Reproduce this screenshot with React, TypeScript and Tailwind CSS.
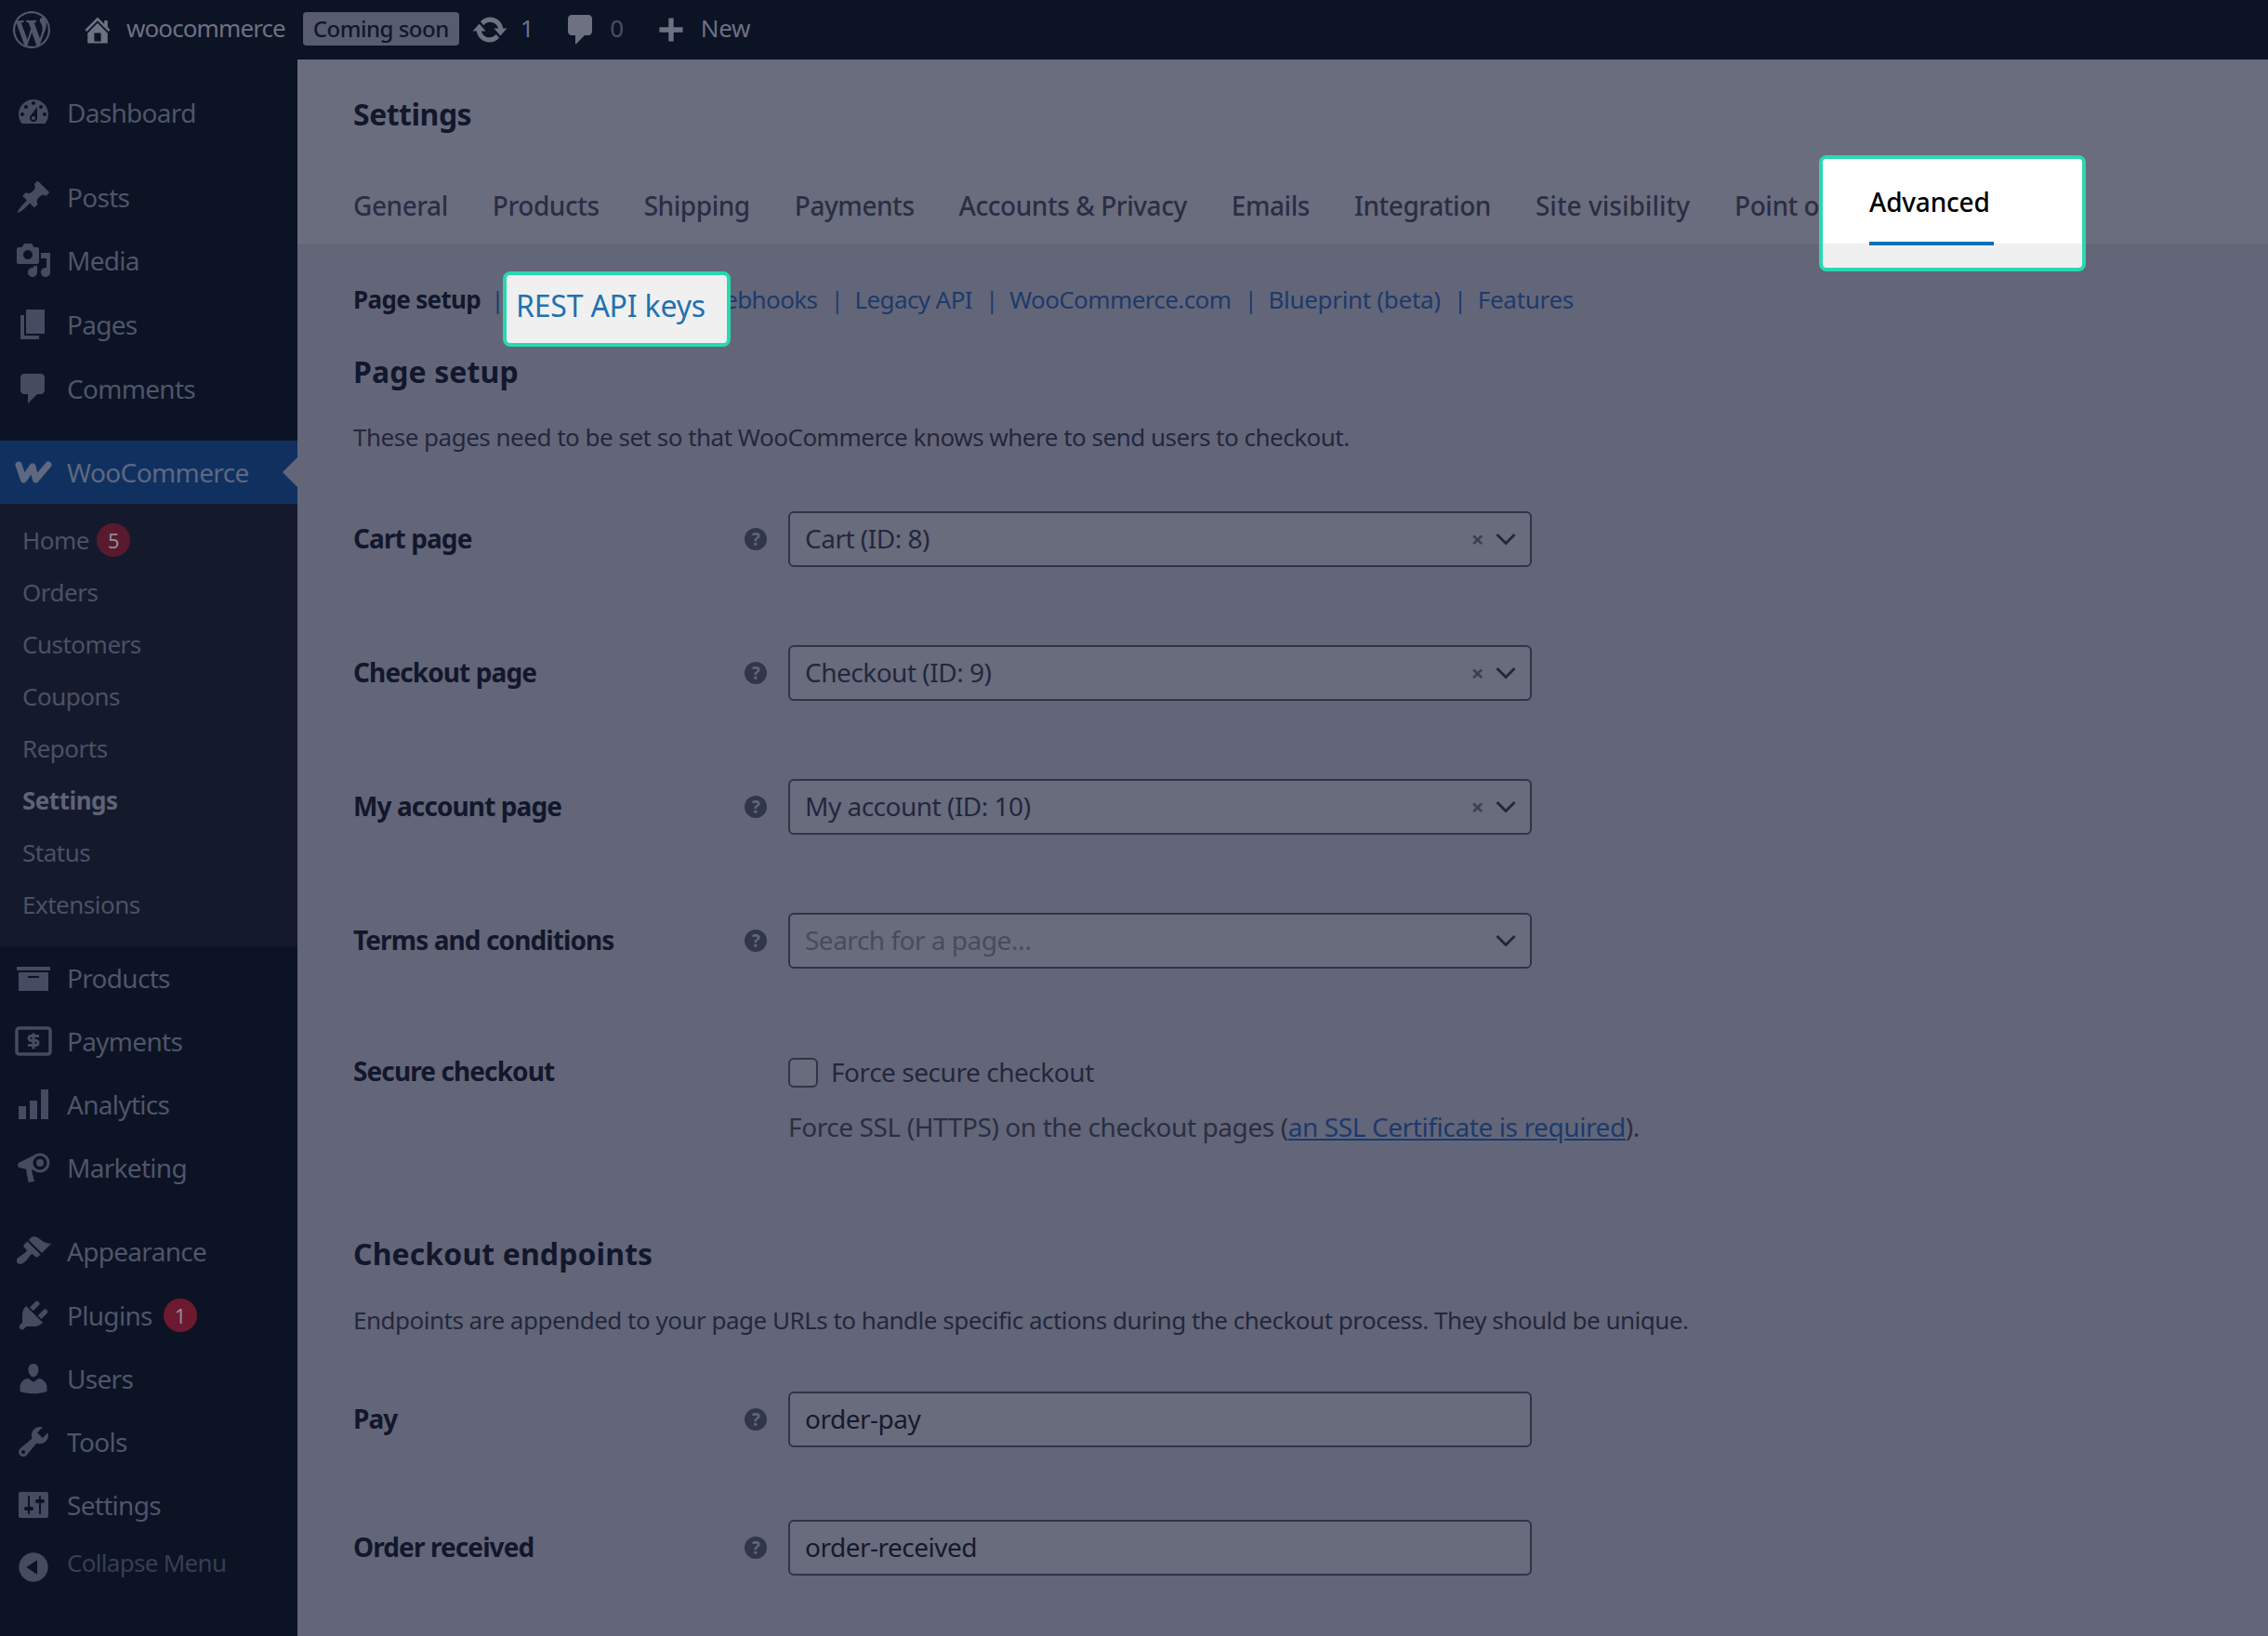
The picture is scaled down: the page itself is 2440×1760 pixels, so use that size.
import React from "react";

const P: Record<string, string> = {
  dashboard: "M3.76 16h12.48c1.1-1.37 1.76-3.11 1.76-5 0-4.42-3.58-8-8-8s-8 3.58-8 8c0 1.89.66 3.63 1.76 5zM10 4c.55 0 1 .45 1 1s-.45 1-1 1-1-.45-1-1 .45-1 1-1zM6 6c.55 0 1 .45 1 1s-.45 1-1 1-1-.45-1-1 .45-1 1-1zm8 0c.55 0 1 .45 1 1s-.45 1-1 1-1-.45-1-1 .45-1 1-1zm-5.37 5.55L12 7v6c0 1.1-.9 2-2 2s-2-.9-2-2c0-.57.24-1.08.63-1.45zM4 10c.55 0 1 .45 1 1s-.45 1-1 1-1-.45-1-1 .45-1 1-1zm12 0c.55 0 1 .45 1 1s-.45 1-1 1-1-.45-1-1 .45-1 1-1zm-5 3c0-.55-.45-1-1-1s-1 .45-1 1 .45 1 1 1 1-.45 1-1z",
  post: "M10.44 3.02l1.82-1.82 6.36 6.35-1.83 1.82c-1.05-.68-2.48-.57-3.41.36l-.75.75c-.92.93-1.04 2.35-.35 3.41l-1.83 1.82-2.41-2.41-2.8 2.79c-.42.42-3.38 2.71-3.8 2.29s1.86-3.39 2.28-3.81l2.79-2.79L4.1 9.36l1.83-1.82c1.05.69 2.48.57 3.4-.36l.75-.75c.93-.92 1.05-2.35.36-3.41z",
  media: "M13 11V4c0-.55-.45-1-1-1h-1.67L9 1H5L3.67 3H2c-.55 0-1 .45-1 1v7c0 .55.45 1 1 1h10c.55 0 1-.45 1-1zM7 4.5c1.38 0 2.5 1.12 2.5 2.5S8.38 9.5 7 9.5 4.5 8.38 4.5 7 5.62 4.5 7 4.5zM14 6h5v10.5c0 1.38-1.12 2.5-2.5 2.5S14 17.88 14 16.5s1.12-2.5 2.5-2.5c.17 0 .34.02.5.05V9h-3V6zm-4 8.05V13h2v3.5c0 1.38-1.12 2.5-2.5 2.5S7 17.88 7 16.5 8.12 14 9.5 14c.17 0 .34.02.5.05z",
  page: "M6 15V2h10v13H6zm-1 1h8v2H3V5h2v11z",
  comment: "M5 2h9c1.1 0 2 .9 2 2v7c0 1.1-.9 2-2 2h-2l-5 5v-5H5c-1.1 0-2-.9-2-2V4c0-1.1.9-2 2-2z",
  archive: "M19 4v2H1V4h18zM2 7h16v10H2V7zm11 3V9H7v1h6z",
  bars: "M2 11h4v7H2zM8 8h4v10H8zM14 2h4v16h-4z",
  appearance: "M14.48 11.06L7.41 3.99l1.5-1.5c.5-.56 2.3-.47 3.51.32 1.21.8 1.43 1.28 2.91 2.1 1.18.64 2.45 1.26 4.45.85zm-.71.71L6.7 4.7 4.93 6.47c-.39.39-.39 1.02 0 1.41l1.06 1.06c.39.39.39 1.03 0 1.42-.6.6-1.43 1.11-2.21 1.69-.35.26-.7.53-1.01.84C1.43 13.23.4 14.67 1.4 16.54c1.87 1 3.31-.03 4.65-1.37.31-.31.58-.66.84-1.01.58-.78 1.09-1.61 1.69-2.21.39-.39 1.02-.39 1.41 0l1.06 1.06c.39.39 1.02.39 1.41 0z",
  plugin: "M13.11 4.36L9.87 7.6 8 5.73l3.24-3.24c.35-.34 1.05-.2 1.56.32.52.51.66 1.21.31 1.55zm-8 1.77l.91-1.12 9.01 9.01-1.19.84c-.71.71-2.63 1.16-3.82 1.16H6.14L4.9 17.26c-.59.59-1.54.59-2.12 0-.59-.58-.59-1.53 0-2.12l1.24-1.24v-3.88c0-1.13.4-3.19 1.09-3.89zm7.26 3.97l3.24-3.24c.34-.35 1.04-.21 1.55.31.52.51.66 1.21.31 1.55l-3.24 3.25z",
  users: "M10 9.25c-2.27 0-2.73-3.44-2.73-3.44C7 4.02 7.82 2 9.97 2c2.16 0 2.98 2.02 2.71 3.81 0 0-.41 3.44-2.68 3.44zm0 2.57L12.72 10c2.39 0 4.52 2.33 4.52 4.53v2.49s-3.65 1.13-7.24 1.13c-3.65 0-7.24-1.13-7.24-1.13v-2.49c0-2.25 1.94-4.48 4.47-4.48z",
  tools: "M16.68 9.77c-1.34 1.34-3.3 1.67-4.95.99l-5.41 6.52c-.99.99-2.59.99-3.58 0s-.99-2.59 0-3.57l6.52-5.42c-.68-1.65-.35-3.61.99-4.95 1.28-1.28 3.12-1.62 4.72-1.06l-2.89 2.89 2.82 2.82 2.86-2.87c.53 1.58.18 3.39-1.08 4.65zM3.81 16.21c.4.39 1.04.39 1.43 0 .4-.4.4-1.04 0-1.43-.39-.4-1.03-.4-1.43 0-.39.39-.39 1.03 0 1.43z",
  settings: "M18 16V4c0-.55-.45-1-1-1H3c-.55 0-1 .45-1 1v12c0 .55.45 1 1 1h14c.55 0 1-.45 1-1zM8 11h1c.55 0 1 .45 1 1s-.45 1-1 1H8v1.5c0 .28-.22.5-.5.5s-.5-.22-.5-.5V13H6c-.55 0-1-.45-1-1s.45-1 1-1h1V5.5c0-.28.22-.5.5-.5s.5.22.5.5V11zm5-2h-1c-.55 0-1-.45-1-1s.45-1 1-1h1V5.5c0-.28.22-.5.5-.5s.5.22.5.5V7h1c.55 0 1 .45 1 1s-.45 1-1 1h-1v5.5c0 .28-.22.5-.5.5s-.5-.22-.5-.5V9z",
  collapse: "M10 2.16c4.33 0 7.84 3.51 7.84 7.84s-3.51 7.84-7.84 7.84S2.16 14.33 2.16 10 5.71 2.16 10 2.16zm2 11.72V6.12L6.18 9.97z",
  home: "M16 8.5l1.53 1.53-1.06 1.06L10 4.62l-6.47 6.47-1.06-1.06L10 2.5l4 4v-2h2v4zm-6-2.46l6 5.99V18H4v-5.97zM12 17v-5H8v5h4z",
  update: "M10.2 3.28c3.53 0 6.43 2.61 6.92 6h2.08l-3.5 4-3.5-4h2.32c-.45-1.97-2.21-3.45-4.32-3.45-1.45 0-2.73.71-3.54 1.78L4.95 5.66C6.23 4.2 8.11 3.28 10.2 3.28zm-.4 13.44c-3.52 0-6.43-2.61-6.92-6H.8l3.5-4c1.17 1.33 2.33 2.67 3.5 4H5.48c.45 1.97 2.21 3.45 4.32 3.45 1.45 0 2.73-.71 3.54-1.78l1.71 1.95c-1.28 1.46-3.15 2.38-5.25 2.38z",
  plus: "M8.5 3h3v5.5H17v3h-5.5V17h-3v-5.5H3v-3h5.5z",
  wp: "M20 10c0-5.51-4.49-10-10-10C4.48 0 0 4.49 0 10c0 5.52 4.48 10 10 10 5.51 0 10-4.48 10-10zM7.78 15.37L4.37 6.22c.55-.02 1.17-.08 1.17-.08.5-.06.44-1.13-.06-1.11 0 0-1.45.11-2.37.11-.18 0-.37 0-.58-.01C4.12 2.69 6.87 1.11 10 1.11c2.33 0 4.45.87 6.05 2.34-.68-.11-1.65.39-1.65 1.58 0 .74.45 1.36.9 2.1.35.61.55 1.36.55 2.46 0 1.49-1.4 5-1.4 5l-3.03-8.37c.54-.02.82-.17.82-.17.5-.05.44-1.25-.06-1.22 0 0-1.44.12-2.38.12-.87 0-2.33-.12-2.33-.12-.5-.03-.56 1.2-.06 1.22l.92.08 1.26 3.41zM17.41 10c.24-.64.74-1.87.43-4.25.7 1.29 1.05 2.71 1.05 4.25 0 3.29-1.73 6.24-4.4 7.78.97-2.59 1.94-5.2 2.92-7.78zM6.1 18.09C3.12 16.65 1.11 13.53 1.11 10c0-1.3.23-2.48.72-3.59C3.25 10.3 4.67 14.2 6.1 18.09zm4.03-6.63l2.58 6.98c-.86.29-1.76.45-2.71.45-.79 0-1.57-.11-2.29-.33.81-2.38 1.62-4.74 2.42-7.1z",
};

function Icon({ d, className }: { d: string; className: string }) {
  return (
    <svg viewBox="0 0 20 20" className={className} fill="currentColor" aria-hidden="true">
      <path d={P[d]} />
    </svg>
  );
}

function PayIcon() {
  return (
    <svg viewBox="0 0 40 32" className="w-10 h-8" aria-hidden="true">
      <rect x="2" y="2" width="36" height="28" rx="2.5" fill="none" stroke="currentColor" strokeWidth="3.5" />
      <path d="M26 10.5h-8.500a1.500 1.500 0 0 0 0 5h5a1.500 1.500 0 0 1 0 5H14M20 7.500v17" fill="none" stroke="currentColor" strokeWidth="3" />
    </svg>
  );
}

function MegaIcon() {
  return (
    <svg viewBox="0 0 36 36" className="w-9 h-9" fill="currentColor" aria-hidden="true">
      <path d="M19 4.500 3 12.500c-2.500 1.300-2.500 5 0 5.800l7 1.500 2.500 14.200 6.500-1-3-12.400 7 .9C16 18 15 10 19 4.500z" />
      <path fillRule="evenodd" d="M25 2.500a10.500 10.500 0 1 1 0 21 10.500 10.500 0 0 1 0-21zm0 3a7.500 7.500 0 1 0 0 15 7.500 7.500 0 0 0 0-15zm0 3.500a4 4 0 1 1 0 8 4 4 0 0 1 0-8z" />
    </svg>
  );
}

function WooIcon() {
  return (
    <svg viewBox="0 0 40 26" className="w-10 h-[26px]" fill="none" stroke="currentColor" strokeWidth="7" strokeLinejoin="round" strokeLinecap="round" aria-hidden="true">
      <path d="M4 5 9.500 21 19 7l3.500 14L36 5" />
    </svg>
  );
}

function Item({ icon, label, badge, faded, h = "h-[68px]" }: { icon: string; label: string; badge?: string; faded?: boolean; h?: string }) {
  return (
    <div className={h + " flex items-center text-[#4f556a] tracking-[-0.7px]"}>
      <div className="w-[72px] flex justify-center text-[#454b60]">
        {icon === "pay" ? <PayIcon /> : icon === "mega" ? <MegaIcon /> : <Icon d={icon} className="w-10 h-10" />}
      </div>
      <span className={faded ? "text-[#383e53] text-[26px] mb-[10px]" : ""}>{label}</span>
      {badge ? (
        <span className="ml-3 w-9 h-[36px] rounded-full bg-[#6d1a30] text-[#8c8d9b] text-[22px] flex items-center justify-center">{badge}</span>
      ) : null}
    </div>
  );
}

function Sub({ label, bold, badge }: { label: string; bold?: boolean; badge?: string }) {
  return (
    <div className={"h-[56px] pl-6 flex items-center text-[26px] tracking-[-0.5px] " + (bold ? "font-bold text-[#5f6378]" : "text-[#4b5166]")}>
      <span>{label}</span>
      {badge ? (
        <span className="ml-2 w-9 h-9 rounded-full bg-[#5a1a2e] text-[#8c8d9b] text-[22px] flex items-center justify-center">{badge}</span>
      ) : null}
    </div>
  );
}

function Help() {
  return (
    <span className="w-6 h-6 rounded-full bg-[#31364b] text-[#636678] text-[19px] font-bold leading-none flex items-center justify-center">?</span>
  );
}

function Row({ label, help, children, mb }: { label: string; help?: boolean; children: React.ReactNode; mb: string }) {
  return (
    <div className={"flex items-center " + mb}>
      <div className="w-[421px] mb-[3px] font-bold text-[28px] text-[#12172c] tracking-[-0.9px]">{label}</div>
      <div className="w-[47px] flex">{help ? <Help /> : null}</div>
      {children}
    </div>
  );
}

function Select({ value, placeholder }: { value: string; placeholder?: boolean }) {
  return (
    <div className="w-[800px] h-[60px] rounded-[6px] border-2 border-[#30344a] bg-[#696c7d] flex items-center pl-[16px] pr-[15px] tracking-[-0.5px]">
      <span className={"flex-1 mb-[2px] " + (placeholder ? "text-[#474b5f]" : "text-[#23273d]")}>{value}</span>
      {!placeholder ? <span className="text-[#3b3f54] text-[24px] font-bold mr-[13px] leading-none">×</span> : null}
      <svg viewBox="0 0 22 14" className="w-[22px] h-[14px]" fill="none" stroke="#23273d" strokeWidth="3" aria-hidden="true">
        <path d="M1.500 2 11 11.500 20.500 2" />
      </svg>
    </div>
  );
}

function TextInput({ value }: { value: string }) {
  return (
    <div className="w-[800px] h-[60px] rounded-[6px] border-2 border-[#30344a] bg-[#696c7d] flex items-center pl-[16px] text-[#15192e] tracking-[-0.5px]">
      <span className="mb-[2px]">{value}</span>
    </div>
  );
}

export default function App() {
  const tabs = ["General", "Products", "Shipping", "Payments", "Accounts & Privacy", "Emails", "Integration"];
  const links = [
    { t: "REST API keys", c: "tracking-[-0.6px]", s: "ml-[11px]" },
    { t: "Webhooks", c: "tracking-[-0.6px]", s: "ml-[16px]" },
    { t: "Legacy API", c: "tracking-[-0.6px]", s: "ml-[14px]" },
    { t: "WooCommerce.com", c: "tracking-[-0.6px]", s: "ml-[14px]" },
    { t: "Blueprint (beta)", c: "tracking-[-0.3px]", s: "ml-[14px]" },
    { t: "Features", c: "tracking-[-0.3px]", s: "ml-[14px]" },
  ];
  return (
    <div className="relative w-[2440px] h-[1760px] overflow-hidden bg-[#636678] font-['Noto_Sans',sans-serif] text-[28px] tracking-[-0.35px]">
      <header className="h-16 bg-[#0c1324] flex items-center text-[#6e7182]">
        <Icon d="wp" className="ml-[14px] w-10 h-10 text-[#50566a]" />
        <Icon d="home" className="ml-[33px] w-[36px] h-[36px]" />
        <span className="ml-[13px] mb-[3px] text-[26px] tracking-[-0.9px]">woocommerce</span>
        <span className="ml-[19px] mb-[2px] h-9 px-[11px] rounded-[4px] bg-[#585c70] text-[#10162a] text-[24px] tracking-[-0.5px] font-medium flex items-center">Coming soon</span>
        <Icon d="update" className="ml-[13px] w-10 h-10" />
        <span className="ml-[13px] mb-[3px] text-[26px]">1</span>
        <Icon d="comment" className="ml-[31px] w-10 h-10" />
        <span className="ml-[11px] mb-[3px] text-[26px] text-[#4a4e60]">0</span>
        <Icon d="plus" className="ml-[33px] w-[36px] h-[36px]" />
        <span className="ml-[14px] mb-[3px] text-[26px]">New</span>
      </header>
      <div className="flex h-[1696px]">
        <aside className="w-[320px] shrink-0 bg-[#0c1324] pt-[23px]">
          <Item icon="dashboard" label="Dashboard" />
          <div className="h-[23px]" />
          <Item icon="post" label="Posts" />
          <Item icon="media" label="Media" />
          <Item icon="page" label="Pages" h="h-[70px]" />
          <Item icon="comment" label="Comments" />
          <div className="h-[22px]" />
          <div className="relative h-[68px] bg-[#103160] flex items-center text-[#5e6880] tracking-[-0.6px]">
            <div className="w-[72px] flex justify-center"><WooIcon /></div>
            <span>WooCommerce</span>
            <span className="absolute right-0 top-[18px] w-0 h-0 border-y-[16px] border-y-transparent border-r-[16px] border-r-[#636678]" />
          </div>
          <div className="bg-[#141a2c] pt-[11px] pb-[17px]">
            <Sub label="Home" badge="5" />
            <Sub label="Orders" />
            <Sub label="Customers" />
            <Sub label="Coupons" />
            <Sub label="Reports" />
            <Sub label="Settings" bold />
            <Sub label="Status" />
            <Sub label="Extensions" />
          </div>
          <Item icon="archive" label="Products" />
          <Item icon="pay" label="Payments" />
          <Item icon="bars" label="Analytics" />
          <Item icon="mega" label="Marketing" />
          <div className="h-[21px]" />
          <Item icon="appearance" label="Appearance" h="h-[70px]" />
          <Item icon="plugin" label="Plugins" badge="1" />
          <Item icon="users" label="Users" />
          <Item icon="tools" label="Tools" />
          <Item icon="settings" label="Settings" />
          <Item icon="collapse" label="Collapse Menu" faded h="h-[66px]" />
        </aside>
        <main className="flex-1 min-w-0">
          <section className="h-[200px] bg-[#6a6d7e] pl-[60px] pt-[38px] border-b border-[#5f6274]">
            <h1 className="text-[32px] font-bold text-[#12172c] tracking-[-0.5px] leading-[42px]">Settings</h1>
            <nav className="mt-[56px] flex gap-[48px] text-[#2a2e44] font-medium whitespace-nowrap tracking-[-0.45px]">
              {tabs.map((t) => (
                <span key={t}>{t}</span>
              ))}
              <span className="tracking-normal">Site visibility</span>
              <span>Point of Sale</span>
            </nav>
          </section>
          <section className="pl-[60px]">
            <nav className="mt-[40px] h-9 flex items-center text-[26px] text-[#1c3a6c] whitespace-nowrap">
              <span className="font-bold text-[#12172c] tracking-[-0.65px]">Page setup</span>
              {links.map((l) => (
                <React.Fragment key={l.t}>
                  <span className={l.s + " mr-[12px]"}>|</span>
                  <span className={l.c}>{l.t}</span>
                </React.Fragment>
              ))}
            </nav>
            <h2 className="mt-[38px] text-[32px] font-bold text-[#12172c] tracking-[0.1px] leading-[44px]">Page setup</h2>
            <p className="mt-[28px] text-[26px] tracking-[-0.5px] text-[#23273d] leading-[40px]">These pages need to be set so that WooCommerce knows where to send users to checkout.</p>
            <div className="mt-[60px]">
              <Row label="Cart page" help mb="mb-[84px]"><Select value="Cart (ID: 8)" /></Row>
              <Row label="Checkout page" help mb="mb-[84px]"><Select value="Checkout (ID: 9)" /></Row>
              <Row label="My account page" help mb="mb-[84px]"><Select value="My account (ID: 10)" /></Row>
              <Row label="Terms and conditions" help mb="mb-[89px]"><Select value="Search for a page…" placeholder /></Row>
              <Row label="Secure checkout" mb="mb-[17px]">
                <span className="w-8 h-8 rounded-[6px] border-2 border-[#30344a] bg-[#696c7d]" />
                <span className="ml-[14px] mb-[2px] text-[#23273d] tracking-[-0.45px]">Force secure checkout</span>
              </Row>
              <p className="ml-[468px] text-[#2a2e44] leading-[38px] tracking-[-0.4px]">
                Force SSL (HTTPS) on the checkout pages (<span className="underline text-[#1c3a6c]">an SSL Certificate is required</span>).
              </p>
            </div>
            <h2 className="mt-[96px] text-[32px] font-bold text-[#12172c] tracking-[0.1px] leading-[44px]">Checkout endpoints</h2>
            <p className="mt-[29px] text-[26px] tracking-[-0.5px] text-[#23273d] leading-[40px]">Endpoints are appended to your page URLs to handle specific actions during the checkout process. They should be unique.</p>
            <div className="mt-[57px]">
              <Row label="Pay" help mb="mb-[78px]"><TextInput value="order-pay" /></Row>
              <Row label="Order received" help mb="mb-0"><TextInput value="order-received" /></Row>
            </div>
          </section>
        </main>
      </div>
      <div className="absolute left-[1957px] top-[167px] w-[287px] h-[125px] rounded-[8px] border-4 border-[#2ad8b0] bg-[#f0f0f1] overflow-hidden text-black">
        <div className="relative h-[91px] bg-white pl-[50px] pt-[26px] leading-[40px] font-medium tracking-[-0.2px]">
          Advanced
          <span className="absolute left-[50px] bottom-[-2px] w-[134px] h-1 bg-[#0073bb]" />
        </div>
      </div>
      <div className="absolute left-[541px] top-[292px] w-[245px] h-[81px] rounded-[8px] border-4 border-[#2ad8b0] bg-[#f0f0f1] flex items-center pl-[10px] pb-[8px] text-[32px] tracking-[-0.2px] text-[#2271b1] whitespace-nowrap">
        REST API keys
      </div>
    </div>
  );
}
